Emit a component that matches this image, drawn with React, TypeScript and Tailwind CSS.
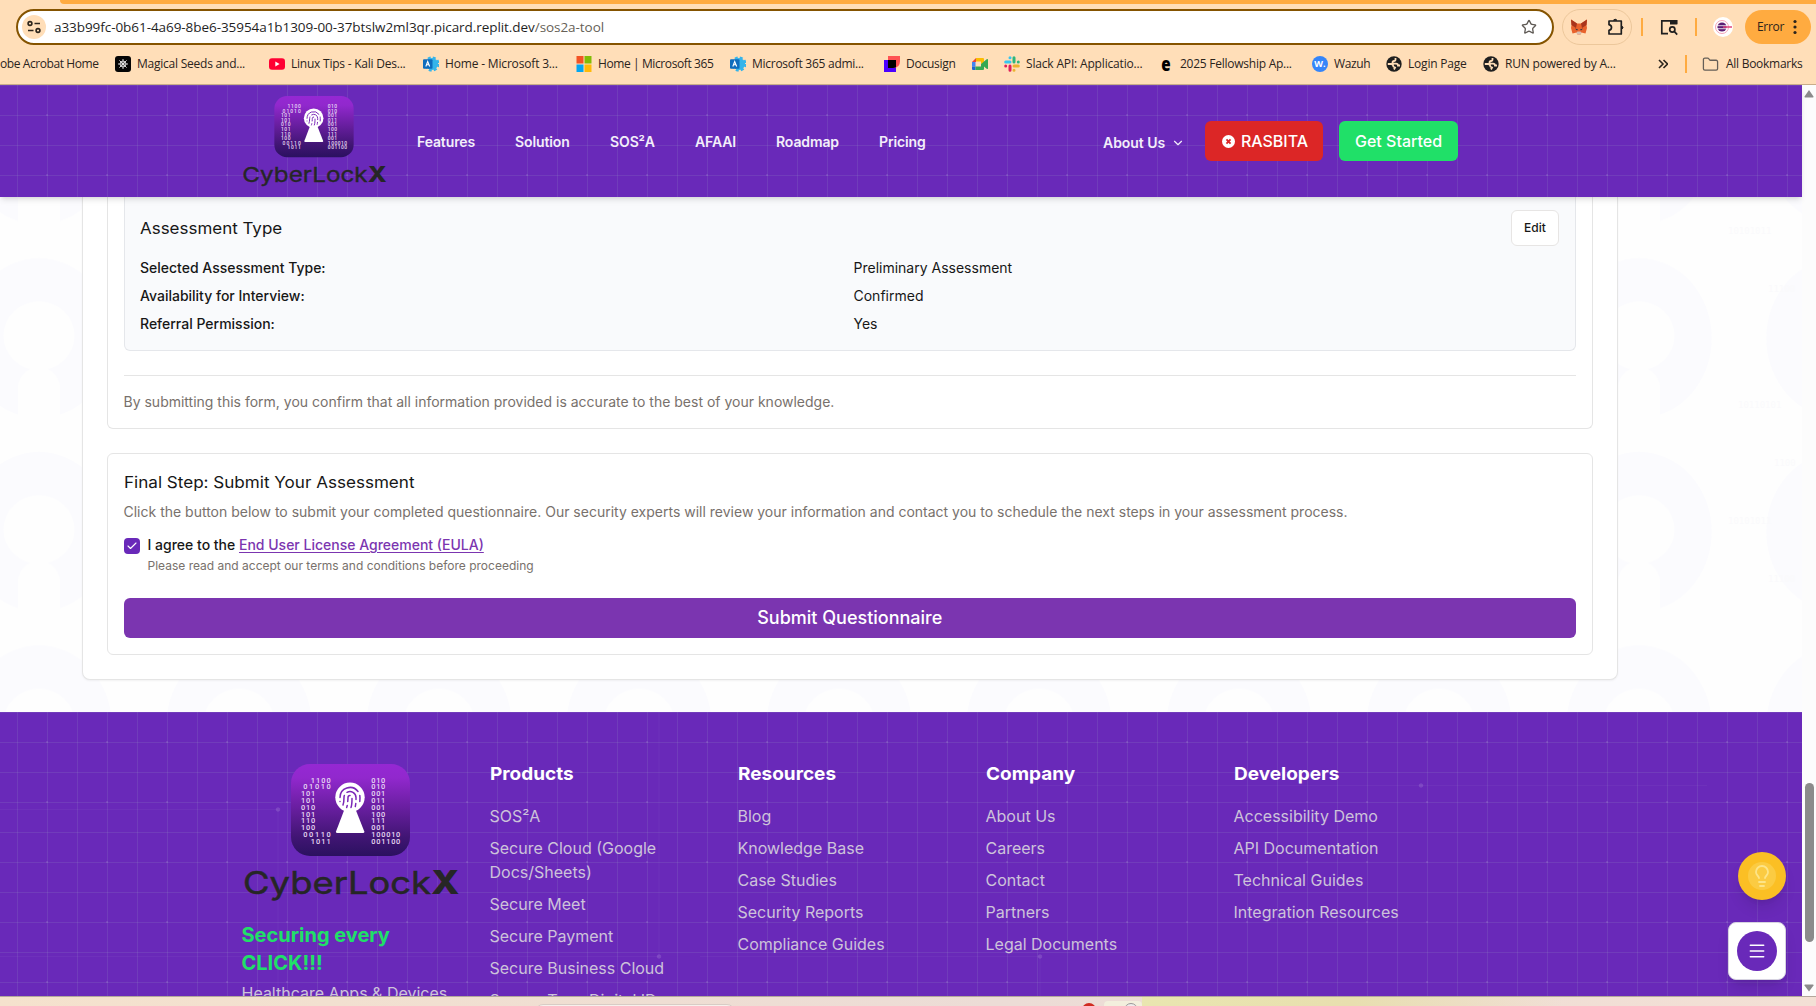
import React from "react";
import { ChevronDown, Check, Fingerprint, Folder, Lightbulb, Menu, Star } from "lucide-react";

const inter = "font-['Inter',sans-serif]";

function Grid({ id, lines }: { id: string; lines: React.ReactNode }) {
  return (
    <svg className="pointer-events-none absolute inset-0 h-full w-full" aria-hidden="true">
      <defs>
        <pattern id={id} x="17" y="0" width="30" height="30" patternUnits="userSpaceOnUse">
          <path d="M0 .5H30M.5 0V30" stroke="#a8b8c8" strokeOpacity=".13" />
        </pattern>
        <pattern id={id + "-dots"} x="46" y="29" width="60" height="60" patternUnits="userSpaceOnUse">
          <rect width="2" height="2" fill="#ffffff" fillOpacity=".09" />
        </pattern>
      </defs>
      <rect width="100%" height="100%" fill={`url(#${id})`} />
      <rect width="100%" height="100%" fill={`url(#${id}-dots)`} />
      {lines}
    </svg>
  );
}

const leftBits: [number, number, string][] = [
  [66.7, 20, "1100"], [59.3, 27.4, "01010"], [57, 14.2, "101"], [57, 14.2, "101"], [57, 14.2, "010"],
  [57, 14.2, "101"], [57, 14.2, "110"], [57, 14.2, "100"], [59.3, 27.4, "00110"], [66.7, 20, "1011"],
];
const rightBits: [number, number, string][] = [
  [127.3, 14, "010"], [127.3, 14, "010"], [127.3, 14, "001"], [127.3, 14, "011"], [127.3, 14, "001"],
  [127.3, 14, "100"], [127.3, 14, "111"], [127.3, 14, "001"], [127.3, 29, "100010"], [127.3, 29, "001100"],
];

function Logo({ id, className }: { id: string; className: string }) {
  return (
    <svg viewBox="0 0 216 140" className={className} aria-label="CyberLockX">
      <defs>
        <linearGradient id={id} x1="0" y1="0" x2="0" y2="1">
          <stop offset="0" stopColor="#9528d3" />
          <stop offset=".15" stopColor="#9128cd" />
          <stop offset=".8" stopColor="#401573" />
          <stop offset="1" stopColor="#2b1160" />
        </linearGradient>
      </defs>
      <rect x="47" y="0" width="119" height="92" rx="19" fill={`url(#${id})`} />
      <g fontFamily="'Roboto',sans-serif" fontWeight="500" fontSize="7.4" fill="#e9dcf5">
        {[...leftBits.map((b, i) => [b, i] as const), ...rightBits.map((b, i) => [b, i] as const)].map(([b, i], k) => (
          <text key={k} x={b[0]} y={18.6 + i * 6.78} textLength={b[1]}>{b[2]}</text>
        ))}
      </g>
      <path d="M101 44H111L120.3 67.5Q120.6 69 119 69H93.3Q91.7 69 92 67.5Z" fill="#fff" />
      <circle cx="106" cy="33.3" r="14.7" fill="#fff" />
      <Fingerprint x="94" y="21.5" width="24" height="24" color="#7b28b8" strokeWidth={1.5} />
      <text x="-1" y="129.5" fontFamily="'Inter',sans-serif" fontWeight="400" fontSize="31" fill="#262626" stroke="#262626" strokeWidth=".5" textLength="188" lengthAdjust="spacingAndGlyphs">CyberLock</text>
      <text x="187" y="129.5" fontFamily="'Inter',sans-serif" fontWeight="800" fontSize="32.5" fill="#262626" textLength="28.5" lengthAdjust="spacingAndGlyphs">X</text>
    </svg>
  );
}

const Globe = () => (
  <svg viewBox="0 0 16 16" className="size-4"><circle cx="8" cy="8" r="7.7" fill="#1f1f1f" /><path d="M1.800 8H5Q7 8 7 9.500T9 11.500L8 13.500M9.500 2V3.500Q9.500 5 8 5T6.500 6.500 8 7.700H10Q12 7.700 12 9.500H14" fill="none" stroke="#ffdeb8" strokeWidth="1.8" /></svg>
);
const Admin = () => (
  <svg viewBox="0 0 16 16" className="size-4"><circle cx="9" cy="8" r="6.1" fill="#35b4ea" /><circle cx="9" cy="8" r="6.3" fill="none" stroke="#35b4ea" strokeWidth="2.6" strokeDasharray="2.9 2.05" /><rect x="0" y="3.2" width="9.5" height="9.5" rx="1" fill="#0f6cbd" /><path d="M2.800 10.500 4.700 5.500 6.700 10.500M3.600 8.800H6" fill="none" stroke="#fff" strokeWidth="1.1" /></svg>
);
const Snowflake = () => (
  <svg viewBox="0 0 16 16" className="size-4"><rect width="16" height="16" rx="3" fill="#050505" /><g stroke="#eee" strokeWidth=".9"><path d="M8 3V13M3 8H13M4.400 4.400 11.600 11.600M11.600 4.400 4.400 11.600" /></g><circle cx="8" cy="8" r="3" fill="none" stroke="#eee" strokeWidth=".8" /></svg>
);
const YouTube = () => (
  <svg viewBox="0 0 16 16" className="size-4"><rect y="2.3" width="16" height="11.4" rx="3" fill="#ff0033" /><path d="M6.300 5.600V10.400L10.600 8Z" fill="#fff" /></svg>
);
const Windows = () => (
  <svg viewBox="0 0 16 16" className="size-4"><path d="M.5 0H7.500V7.500H.5Z" fill="#f35325" /><path d="M8.500 0H15.500V7.500H8.500Z" fill="#81bc06" /><path d="M.5 8.500H7.500V16H.5Z" fill="#05a6f0" /><path d="M8.500 8.500H15.500V16H8.500Z" fill="#ffba08" /></svg>
);
const Docusign = () => (
  <svg viewBox="0 0 16 16" className="size-4"><path d="M0 4H12V16H0Z" fill="#4c00ff" /><path d="M4 0H16V5Q16 12 9 12H4Z" fill="#ff5252" /><path d="M4 4H12V11.200Q10.500 12 9 12H4Z" fill="#000" /></svg>
);
const Meet = () => (
  <svg viewBox="0 0 16 16" className="size-4"><path d="M0 6 4 2V6Z" fill="#ea4335" /><path d="M0 6H3.500V10.500H0Z" fill="#4285f4" /><path d="M0 10.500H3.500V14H1Q0 14 0 13Z" fill="#1967d2" /><path d="M4 2H11Q12 2 12 3V7L9 8V5.500H4Z" fill="#fbbc04" /><path d="M3.500 10.500H9V8L15 3Q16 2.500 16 4V12.500Q15.500 13.300 15 13L12 10.500V13Q12 14 11 14H3.500Z" fill="#34a853" /></svg>
);
const Slack = () => (
  <svg viewBox="0 0 16 16" className="size-4" strokeWidth="3" strokeLinecap="round"><path d="M1.700 6H6" stroke="#36c5f0" /><path d="M6 1.700V1.800" stroke="#36c5f0" /><path d="M10 1.700V6M14.300 6V6.100" stroke="#2eb67d" /><path d="M10 10H14.300M10 14.200V14.300" stroke="#ecb22e" /><path d="M6 10V14.300M1.700 10V10.100" stroke="#e01e5a" /></svg>
);
const Wazuh = () => (
  <span className="flex size-4 items-center justify-center rounded-full bg-[#3585f9] text-[9px] font-bold text-white">W.</span>
);

const bookmarks: { icon?: React.ReactNode; label: string; w: string; t: string }[] = [
  { label: "obe Acrobat Home", w: "w-[115px]", t: "tracking-[-0.42px]" },
  { icon: <Snowflake />, label: "Magical Seeds and...", w: "w-[154px]", t: "tracking-[-0.23px]" },
  { icon: <YouTube />, label: "Linux Tips - Kali Des...", w: "w-[154px]", t: "tracking-[-0.23px]" },
  { icon: <Admin />, label: "Home - Microsoft 3...", w: "w-[153px]", t: "tracking-[-0.17px]" },
  { icon: <Windows />, label: "Home | Microsoft 365", w: "w-[154px]", t: "tracking-[-0.4px]" },
  { icon: <Admin />, label: "Microsoft 365 admi...", w: "w-[154px]", t: "tracking-[-0.27px]" },
  { icon: <Docusign />, label: "Docusign", w: "w-[88px]", t: "tracking-[-0.25px]" },
  { icon: <Meet />, label: "", w: "w-[32px]", t: "" },
  { icon: <Slack />, label: "Slack API: Applicatio...", w: "w-[154px]", t: "tracking-[-0.17px]" },
  { icon: <span className="w-4 scale-x-[.8] text-center text-[19px] leading-4 font-extrabold text-black">e</span>, label: "2025 Fellowship Ap...", w: "w-[154px]", t: "tracking-[-0.25px]" },
  { icon: <Wazuh />, label: "Wazuh", w: "w-[74px]", t: "tracking-[-0.4px]" },
  { icon: <Globe />, label: "Login Page", w: "w-[97px]", t: "tracking-[-0.2px]" },
  { icon: <Globe />, label: "RUN powered by A...", w: "w-[175px]", t: "tracking-[-0.2px]" },
];

function Browser() {
  return (
    <div className="flex h-[85px] shrink-0 flex-col border-b border-[#c9ad8a] bg-[#ffdeb8] font-['Open_Sans',sans-serif] text-[#2b241c]">
      <div className="ml-[60px] h-1 shrink-0 rounded-bl-lg bg-[#ffab40]" />
      <div className="mt-[5px] flex h-9 shrink-0 items-center pl-4">
        <div className="flex h-9 w-[1538px] items-center rounded-full border-2 border-[#855400] bg-white pr-[15px] pl-1">
          <span className="flex size-6 items-center justify-center rounded-full bg-[#ffdeb8]">
            <svg viewBox="0 0 14 14" className="size-3.5" fill="none" stroke="#2b241c" strokeWidth="1.6"><circle cx="3" cy="3.5" r="1.9" /><path d="M7.500 3.500H13M1 10.500H6.500" /><circle cx="11" cy="10.5" r="1.9" /></svg>
          </span>
          <span className="ml-2 flex-1 text-[13.5px] tracking-[-0.06px] whitespace-nowrap text-[#1f1f1f]">
            a33b99fc-0b61-4a69-8be6-35954a1b1309-00-37btslw2ml3qr.picard.replit.dev<span className="text-[#665f57]">/sos2a-tool</span>
          </span>
          <Star className="size-4 text-[#5f5a55]" strokeWidth={2} />
        </div>
        <div className="ml-2 flex h-9 w-[70px] items-center justify-between rounded-full border border-[#ecc79b] pr-1.5 pl-2">
          <svg viewBox="0 0 16 16" className="size-4"><path d="M0 .5 6 4.500H10L16 .5 15.500 6 16 9 14.500 14.500 10.500 13.500 9.500 15.500H6.500L5.500 13.500 1.500 14.500 0 9 .5 6Z" fill="#e8622c" /><path d="M0 .5 6 4.500 5 9 .5 6ZM16 .5 10 4.500 11 9 15.500 6Z" fill="#a8341c" /><path d="M4 9.500 7 10.500 6 11.500ZM12 9.500 9 10.500 10 11.500Z" fill="#233447" /><path d="M5.500 13.500 6.500 12.500H9.500L10.500 13.500 9.500 15.500H6.500Z" fill="#d5bfb2" /></svg>
          <svg viewBox="0 0 18 18" className="size-[18px]" fill="none" stroke="#1f1f1f" strokeWidth="1.7"><path d="M2 3H14.300V16H2V12.300Q4.500 11.800 4.500 9.500T2 6.700Z" strokeLinejoin="round" /><path d="M6.500 2.200Q8.200 .2 9.900 2.200ZM15 8.200Q17 9.600 15 11Z" fill="#1f1f1f" strokeWidth="1" /></svg>
        </div>
        <span className="ml-[9px] h-[18px] w-[2px] bg-[#ffab40]" />
        <svg viewBox="0 0 18 18" className="ml-[17px] size-[18px]" fill="none" stroke="#1f1f1f" strokeWidth="1.7"><path d="M8 15.700H1.800V2.800H16.500V6" /><path d="M10 2H17.300V6.500H10Z" fill="#1f1f1f" stroke="none" /><circle cx="12.3" cy="11.5" r="2.6" /><path d="M14.200 13.400 17.200 16.600" /></svg>
        <span className="ml-[17px] h-[18px] w-[2px] bg-[#ffab40]" />
        <svg viewBox="0 0 20 20" className="ml-4 size-5"><circle cx="10" cy="10" r="10" fill="#fff" /><circle cx="9" cy="10" r="6.5" fill="none" stroke="#f5a3b8" /><circle cx="9" cy="10" r="4.6" fill="#5b1e74" /><path d="M4 8.700H14M4 11.700H14" stroke="#fff" strokeWidth=".8" /><path d="M10 10H19" stroke="#e0447c" strokeWidth="1.5" /></svg>
        <span className="ml-3 flex h-[34px] w-[66px] items-center justify-between rounded-full bg-[#ffab40] pr-[14px] pl-3 text-xs tracking-[-0.3px]">
          Error
          <svg viewBox="0 0 4 16" className="h-4 w-1" fill="#2b241c"><circle cx="2" cy="2.5" r="1.6" /><circle cx="2" cy="8" r="1.6" /><circle cx="2" cy="13.5" r="1.6" /></svg>
        </span>
      </div>
      <div className="flex h-[38px] shrink-0 items-center text-xs">
        {bookmarks.map((b, i) => (
          <div key={i} className={`flex shrink-0 items-center gap-1.5 ${b.w}`}>
            {b.icon}
            <span className={`whitespace-nowrap ${b.t}`}>{b.label}</span>
          </div>
        ))}
        <svg viewBox="0 0 10 10" className="size-2.5" fill="none" stroke="#2b241c" strokeWidth="1.6"><path d="M1 1 5 5 1 9M5.500 1 9.500 5 5.500 9" /></svg>
        <span className="ml-[17px] h-[18px] w-[2px] bg-[#ffab40]" />
        <Folder className="ml-[15px] size-[17px] text-[#665f57]" strokeWidth={1.8} />
        <span className="ml-[7px] tracking-[-0.27px] whitespace-nowrap">All Bookmarks</span>
      </div>
    </div>
  );
}

const nav: [string, string][] = [
  ["Features", "w-[98px]"], ["Solution", "w-[95px]"], ["SOS²A", "w-[85px]"],
  ["AFAAI", "w-[81px]"], ["Roadmap", "w-[103px]"], ["Pricing", "w-[224px]"],
];

function Header() {
  return (
    <header className="relative z-10 h-28 shrink-0 bg-[#6929b9] shadow-md">
      <Grid id="hgrid" lines={null} />
      <div className="relative flex h-full items-center pl-[243px] text-sm font-semibold text-[#f3eefa]">
        <Logo id="hl" className="mt-[3px] mr-[30px] h-[93.3px] w-36 shrink-0 overflow-visible" />
        {nav.map(([n, w]) => (
          <span key={n} className={`shrink-0 pt-[2px] tracking-[-0.12px] ${w}`}>{n}</span>
        ))}
        <span className="flex w-[80px] items-center gap-1.5 pt-1 tracking-[-0.05px] whitespace-nowrap">
          About Us <ChevronDown className="size-3.5 shrink-0" strokeWidth={2} />
        </span>
        <span className="ml-[22px] flex h-10 w-[118px] items-center justify-center gap-1.5 rounded-md bg-[#dc2626] pl-0.5 text-base font-medium text-white">
          <svg viewBox="0 0 14 14" className="size-[13px]"><circle cx="7" cy="7" r="7" fill="#fff" /><path d="M4.800 4.800 9.200 9.200M9.200 4.800 4.800 9.200" stroke="#dc2626" strokeWidth="2" /></svg>
          RASBITA
        </span>
        <span className="ml-4 flex h-10 w-[119px] items-center justify-center rounded-md bg-[#20e068] text-base font-medium whitespace-nowrap text-white">Get Started</span>
      </div>
    </header>
  );
}

const details = [
  ["Selected Assessment Type:", "Preliminary Assessment"],
  ["Availability for Interview:", "Confirmed"],
  ["Referral Permission:", "Yes"],
];

function Form() {
  return (
    <main className="relative h-[515px] shrink-0 bg-[#fefefe]">
      <svg className="pointer-events-none absolute inset-0 h-full w-full" aria-hidden="true">
        <defs>
          <pattern id="locks" x="-61" y="44.3" width="200" height="193.6" patternUnits="userSpaceOnUse">
            <ellipse cx="100" cy="96.8" rx="72.7" ry="80" fill="#fbfbfe" />
            <ellipse cx="100" cy="94.5" rx="35.7" ry="34.6" fill="#fefefe" />
            <path d="M79 190V143Q84 126 100 126T121 143V190Z" fill="#fefefe" />
          </pattern>
        </defs>
        <rect width="100%" height="100%" fill="url(#locks)" />
        <g fontFamily="'DejaVu Sans Mono',monospace" fontSize="9" fill="#fafafc">
          <text x="1728" y="37">10101011</text>
          <text x="1768" y="95">11100</text>
          <text x="1738" y="211">10110101</text>
          <text x="1774" y="269">1100</text>
          <text x="1728" y="327">10101011</text>
          <text x="1768" y="385">11100</text>
        </g>
      </svg>
      <div className="relative mr-[184px] ml-[82px] flex h-[483px] flex-col gap-6 rounded-b-lg border border-t-0 border-[#e5e5e5] bg-white px-6 pb-6 shadow-xs">
        <section className="h-[232px] shrink-0 rounded-b-md border border-t-0 border-[#e5e5e5] pr-4 pl-[15.5px]">
          <div className="h-[154px] rounded-b-md border border-t-0 border-[#e5e7eb] bg-[#f9fafc] pt-[12.5px] pr-4 pl-[15.5px]">
            <div className="flex h-9 items-center justify-between">
              <h3 className="origin-left scale-x-[1.06] text-base leading-5 text-[#171717]">Assessment Type</h3>
              <span className="flex h-9 w-12 items-center justify-center rounded-md border border-[#e7e5e4] bg-white text-xs font-medium text-[#171717]">Edit</span>
            </div>
            <dl className="mt-[12.5px] grid grid-cols-2 gap-x-2 gap-y-2 text-sm text-[#171717]">
              {details.map(([k, v]) => (
                <React.Fragment key={k}>
                  <dt className="font-medium">{k}</dt>
                  <dd>{v}</dd>
                </React.Fragment>
              ))}
            </dl>
          </div>
          <div className="mt-6 border-t border-[#e5e5e5] pt-4 text-sm text-[#78716c]">
            By submitting this form, you confirm that all information provided is accurate to the best of your knowledge.
          </div>
        </section>
        <section className="h-[202px] shrink-0 rounded-md border border-[#e5e5e5] pt-4 pr-4 pl-[15.5px] text-sm">
          <h3 className="w-fit origin-left scale-x-[1.067] text-base leading-6 text-[#171717]">Final Step: Submit Your Assessment</h3>
          <p className="mt-2 text-[#78716c]">Click the button below to submit your completed questionnaire. Our security experts will review your information and contact you to schedule the next steps in your assessment process.</p>
          <div className="mt-[13px] flex gap-2">
            <span className="mt-[3px] flex size-4 items-center justify-center rounded bg-[#6929b9] text-white"><Check className="size-3" strokeWidth={2.2} /></span>
            <div>
              <div className="font-medium text-[#171717]">I agree to the <a className="text-[#7b35b0] underline underline-offset-2">End User License Agreement (EULA)</a></div>
              <div className="mt-[3px] text-xs text-[#78716c]">Please read and accept our terms and conditions before proceeding</div>
            </div>
          </div>
          <div className="mt-6 flex h-10 items-center justify-center rounded-md bg-[#7b35b0] text-lg font-medium text-white">Submit Questionnaire</div>
        </section>
      </div>
    </main>
  );
}

const columns: [string, string[]][] = [
  ["Products", ["SOS²A", "Secure Cloud (Google Docs/Sheets)", "Secure Meet", "Secure Payment", "Secure Business Cloud", "Secure Teen Digital ID"]],
  ["Resources", ["Blog", "Knowledge Base", "Case Studies", "Security Reports", "Compliance Guides"]],
  ["Company", ["About Us", "Careers", "Contact", "Partners", "Legal Documents"]],
  ["Developers", ["Accessibility Demo", "API Documentation", "Technical Guides", "Integration Resources"]],
];

function Footer() {
  return (
    <footer className="relative h-[284px] shrink-0 overflow-hidden bg-[#6929b9]">
      <Grid
        id="fgrid"
        lines={
          <g stroke="#fff" strokeOpacity=".04" fill="#fff">
            <path d="M0 97.500H278V284M0 244.500H659V0M700 244.500H1040V284M1040 73.500H1707" fill="none" />
            <g fillOpacity=".13"><circle cx="278" cy="97.5" r="2" /><circle cx="659" cy="244.5" r="2" /><circle cx="1040" cy="244.5" r="2" /><circle cx="1421" cy="73.5" r="2" /></g>
          </g>
        }
      />
      <div className="relative grid w-[1449.5px] grid-cols-5 gap-8 pt-12 pl-[241.5px] text-base text-[#cdc3da]">
        <div>
          <Logo id="fl" className="mt-1 ml-[2px] h-[140px] w-[216px] overflow-visible" />
          <div className="mt-[17px] text-xl leading-7 font-bold text-[#20e068]">Securing every<br />CLICK!!!</div>
          <div className="mt-1 whitespace-nowrap">Healthcare Apps &amp; Devices</div>
        </div>
        {columns.map(([t, items]) => (
          <div key={t}>
            <h4 className="w-fit origin-left scale-x-[1.055] text-lg leading-7 font-bold text-white">{t}</h4>
            <ul className="mt-4 space-y-2">
              {items.map((i) => <li key={i}>{i}</li>)}
            </ul>
          </div>
        ))}
      </div>
    </footer>
  );
}

export default function App() {
  return (
    <div className={`relative flex h-[1006px] w-[1816px] flex-col overflow-hidden ${inter}`}>
      <Browser />
      <div className="flex h-[911px] shrink-0">
        <div className="flex w-[1802px] flex-col">
          <Header />
          <Form />
          <Footer />
        </div>
        <div className="flex w-3.5 flex-col items-center bg-[#fcfcfc] pt-[5px]">
          <svg viewBox="0 0 10 8" className="h-2 w-2.5" fill="#8b8b8b"><path d="M5 0 9.500 6.500Q9.500 7.500 9 7.500H1Q.5 7.500 .5 6.500Z" /></svg>
          <span className="mt-[685px] h-[159px] w-[9px] shrink-0 rounded-full bg-[#8b8b8b]" />
          <svg viewBox="0 0 10 8" className="mt-[42px] h-2 w-2.5 shrink-0" fill="#8b8b8b"><path d="M5 7.500 9.500 1.500Q9.500 .5 9 .5H1Q.5 .5 .5 1.500Z" /></svg>
        </div>
      </div>
      <div className="flex h-2.5 shrink-0 overflow-hidden border-t border-[#b3a79c] bg-linear-to-r from-[#f5e2cd] via-[#ecdcd6] via-55% to-[#f3e0d5]">
        <span className="mt-[7px] ml-[535px] h-4 w-[200px] shrink-0 rounded-lg border border-[#d8ccc5] bg-[#f7f1ec]" />
        <span className="mt-[6px] ml-[347px] size-3.5 shrink-0 rounded-full bg-[#d02b20]" />
        <span className="mt-[4px] ml-2 flex h-4 w-[38px] shrink-0 justify-end rounded bg-[#f3efdd] pr-1"><span className="mt-0.5 size-3.5 rounded-full border border-[#999] bg-[#f0ecec]" /></span>
        <span className="h-full w-[420px] bg-linear-to-r from-[#e9e6b0] via-[#e8dfaf] to-transparent" />
      </div>
      <span className="absolute top-[852px] left-[1738px] flex size-12 items-center justify-center rounded-full bg-[#fbbf24] shadow-lg">
        <span className="flex size-7 items-center justify-center rounded-full bg-[#fbcb42] text-[#fde488]"><Lightbulb className="size-6" strokeWidth={1.8} /></span>
      </span>
      <span className="absolute top-[922px] left-[1728px] flex size-[58px] items-center justify-center rounded-lg border border-[#d6d3e0] bg-white shadow-lg">
        <span className="flex size-10 items-center justify-center rounded-full bg-[#6929b9] text-white"><Menu className="size-5" strokeWidth={1.8} /></span>
      </span>
    </div>
  );
}
